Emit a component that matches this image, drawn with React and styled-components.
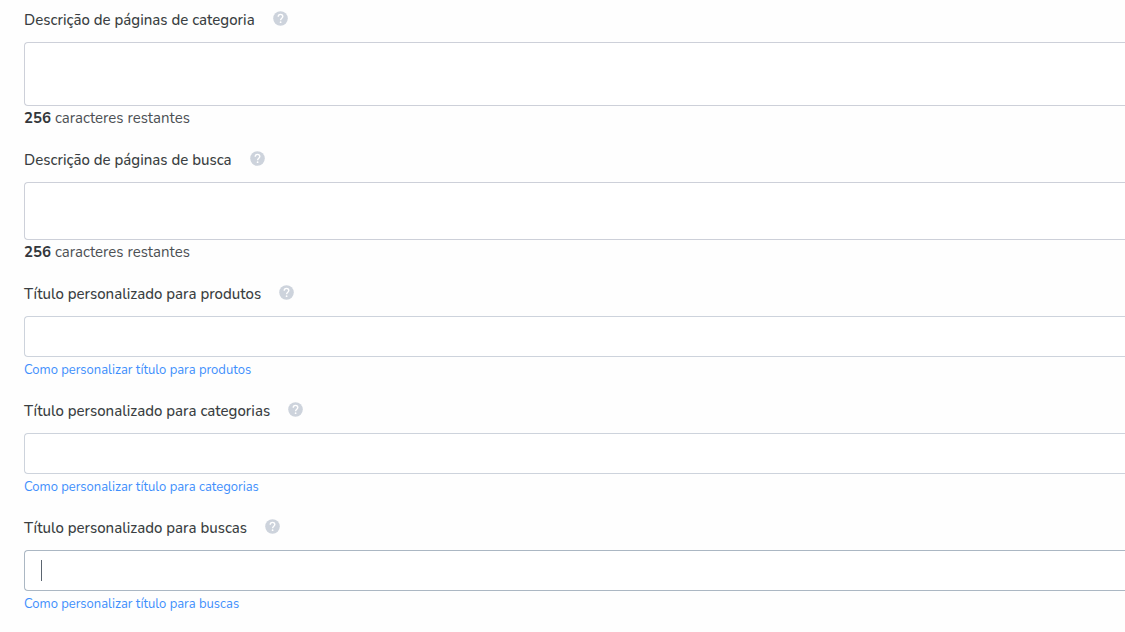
import React from 'react';
import styled, { createGlobalStyle, css } from 'styled-components';

const GlobalStyle = createGlobalStyle`
	* {
		box-sizing: border-box;
	}

	body {
		margin: 0;
		background: #fefefe;
		color: #333a40;
		font-family: Nunito, 'Open Sans', 'Noto Sans', sans-serif;
		font-size: 15px;
		line-height: 20px;
	}
`;

// The fields run up to the right edge of the window
const Form = styled.form`
	display: flex;
	flex-direction: column;
	gap: 22px;
	padding: 10px 0 20px 24px;
`;

const Field = styled.div`
	display: flex;
	flex-direction: column;
	align-items: flex-start;
`;

const LabelRow = styled.div`
	display: flex;
	gap: 18px;
	margin-bottom: 12px;
`;

const Label = styled.label`
	font-size: 15px;
	font-weight: 500;
	color: #3a3e42;
`;

const HelpButton = styled.button`
	display: flex;
	width: 15px;
	height: 15px;
	margin-top: 1px;
	padding: 0;
	border: 0;
	background: none;
	cursor: pointer;
`;

const control = css`
	display: block;
	width: 100%;
	padding: 8px 16px;
	border: 1px solid #cdd0d9;
	border-right: 0;
	border-radius: 4px 0 0 4px;
	outline: 0;
	background: #fff;
	color: inherit;
	font: inherit;
`;

const TextArea = styled.textarea`
	${control}
	height: ${props => props.$height}px;
	resize: none;
`;

const InputBox = styled.div`
	position: relative;
	width: 100%;
`;

const Input = styled.input`
	${control}
	height: 41px;
	border-color: ${props => (props.$active ? '#abb7c3' : '#cdd3dc')};
	caret-color: transparent;
`;

// Text cursor of the active input
const Caret = styled.span`
	position: absolute;
	top: 10px;
	left: 17px;
	width: 1px;
	height: 21px;
	background: #5b6570;
	pointer-events: none;
`;

const Counter = styled.p`
	margin: 2px 0 0;
	font-size: 15px;
	color: #4c5054;

	strong {
		font-weight: 700;
		color: #33373b;
	}
`;

const HelpLink = styled.a`
	margin-top: 4px;
	font-size: 13px;
	line-height: 18px;
	color: #3e8ffc;
	text-decoration: none;

	&:hover {
		text-decoration: underline;
	}
`;

const HelpIcon = () => (
	<svg width="15" height="15" viewBox="0 0 15 15" aria-hidden="true">
		<circle cx="7.5" cy="7.5" r="7.3" fill="#cdd3dc" />
		<path
			d="M5.2 5.8C5.2 4.3 6.1 3.4 7.5 3.4S9.8 4.3 9.8 5.6C9.8 7.2 7.6 7.2 7.6 9.2"
			fill="none"
			stroke="#fff"
			strokeWidth="1.4"
		/>
		<circle cx="7.6" cy="11.2" r="0.9" fill="#fff" />
	</svg>
);

const FieldLabel = ({ id, text }) => (
	<LabelRow>
		<Label htmlFor={id}>{text}</Label>
		<HelpButton type="button" aria-label={`Ajuda: ${text}`}>
			<HelpIcon />
		</HelpButton>
	</LabelRow>
);

const DescriptionField = ({ id, label, height }) => (
	<Field>
		<FieldLabel id={id} text={label} />
		<TextArea id={id} maxLength={256} $height={height} />
		<Counter>
			<strong>256</strong> caracteres restantes
		</Counter>
	</Field>
);

const TitleField = ({ id, label, link, active }) => (
	<Field>
		<FieldLabel id={id} text={label} />
		<InputBox>
			<Input id={id} type="text" $active={active} />
			{active && <Caret />}
		</InputBox>
		<HelpLink href={`#${id}`}>{link}</HelpLink>
	</Field>
);

const App = () => (
	<>
		<GlobalStyle />
		<Form>
			<DescriptionField id="descricao-categoria" label="Descrição de páginas de categoria" height={64} />
			<DescriptionField id="descricao-busca" label="Descrição de páginas de busca" height={58} />
			<TitleField
				id="titulo-produtos"
				label="Título personalizado para produtos"
				link="Como personalizar título para produtos"
			/>
			<TitleField
				id="titulo-categorias"
				label="Título personalizado para categorias"
				link="Como personalizar título para categorias"
			/>
			<TitleField
				id="titulo-buscas"
				label="Título personalizado para buscas"
				link="Como personalizar título para buscas"
				active
			/>
		</Form>
	</>
);

export default App;
